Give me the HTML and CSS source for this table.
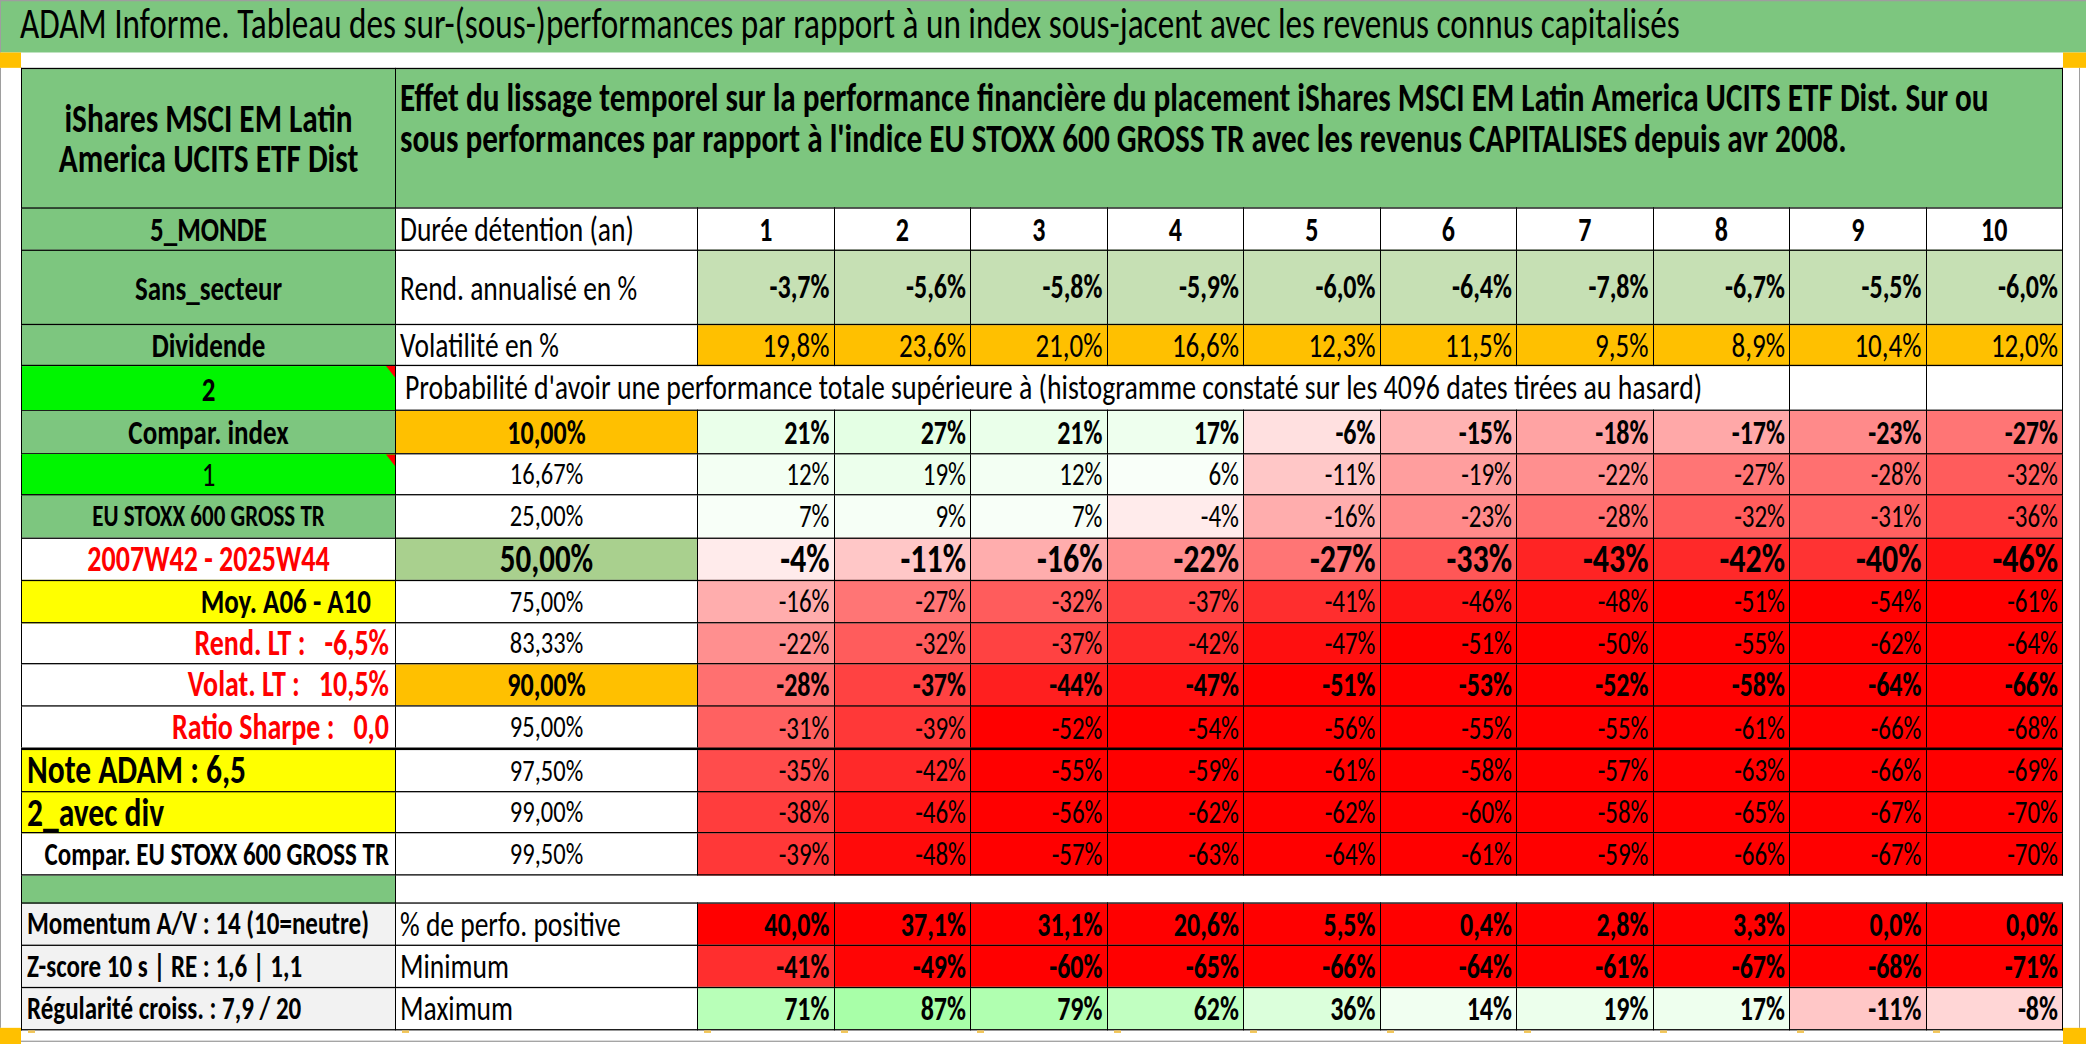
FILE: index.html
```html
<!DOCTYPE html>
<html lang="fr">
<head>
<meta charset="utf-8">
<title>ADAM Informe</title>
<link rel="stylesheet" href="styles.css">
</head>
<body>
<div class="page">
  <header class="title">ADAM Informe. Tableau des sur-(sous-)performances par rapport à un index sous-jacent avec les revenus connus capitalisés</header>
  <div class="strip"><span class="handle"></span><span class="handle hr"></span></div>
  <div class="mid">
    <div class="lg"></div>
    <table class="grid">
      <colgroup>
        <col class="c-lab"><col class="c-lab2">
        <col><col><col><col><col><col><col><col><col><col>
      </colgroup>
      <tr class="h-head">
        <td class="g hd-lab">iShares MSCI EM Latin<br>America UCITS ETF Dist</td>
        <td class="g hd-desc" colspan="11">Effet du lissage temporel sur la performance financière du placement iShares MSCI EM Latin America UCITS ETF Dist. Sur ou<br>sous performances par rapport à l'indice EU STOXX 600 GROSS TR avec les revenus CAPITALISES depuis avr 2008.</td>
      </tr>
      <tr class="h42">
        <td class="g lab c">5_MONDE</td>
        <td class="lab2">Durée détention (an)</td>
        <td class="yr">1</td><td class="yr">2</td><td class="yr">3</td><td class="yr">4</td><td class="yr">5</td><td class="yr">6</td><td class="yr">7</td><td class="yr">8</td><td class="yr">9</td><td class="yr">10</td>
      </tr>
      <tr class="h75">
        <td class="g lab c">Sans_secteur</td>
        <td class="lab2">Rend. annualisé en %</td>
        <td class="vb lg2">-3,7%</td><td class="vb lg2">-5,6%</td><td class="vb lg2">-5,8%</td><td class="vb lg2">-5,9%</td><td class="vb lg2">-6,0%</td><td class="vb lg2">-6,4%</td><td class="vb lg2">-7,8%</td><td class="vb lg2">-6,7%</td><td class="vb lg2">-5,5%</td><td class="vb lg2">-6,0%</td>
      </tr>
      <tr class="h41">
        <td class="g lab c">Dividende</td>
        <td class="lab2">Volatilité en %</td>
        <td class="vol or">19,8%</td><td class="vol or">23,6%</td><td class="vol or">21,0%</td><td class="vol or">16,6%</td><td class="vol or">12,3%</td><td class="vol or">11,5%</td><td class="vol or">9,5%</td><td class="vol or">8,9%</td><td class="vol or">10,4%</td><td class="vol or">12,0%</td>
      </tr>
      <tr class="h45">
        <td class="bg lab c cm">2</td>
        <td class="prob" colspan="9">Probabilité d'avoir une performance totale supérieure à (histogramme constaté sur les 4096 dates tirées au hasard)</td>
        <td></td><td></td>
      </tr>
      <tr class="h43">
        <td class="g lab c">Compar. index</td>
        <td class="p pb or">10,00%</td>
        <td class="vb" style="background:#eaffea">21%</td><td class="vb" style="background:#e4ffe4">27%</td><td class="vb" style="background:#eaffea">21%</td><td class="vb" style="background:#eeffee">17%</td><td class="vb" style="background:#ffe0e0">-6%</td><td class="vb" style="background:#ffb3b3">-15%</td><td class="vb" style="background:#ffa3a3">-18%</td><td class="vb" style="background:#ffa8a8">-17%</td><td class="vb" style="background:#ff8a8a">-23%</td><td class="vb" style="background:#ff7575">-27%</td>
      </tr>
      <tr class="h41">
        <td class="bg lab one c cm">1</td>
        <td class="p">16,67%</td>
        <td class="vr" style="background:#f3fff3">12%</td><td class="vr" style="background:#ecffec">19%</td><td class="vr" style="background:#f3fff3">12%</td><td class="vr" style="background:#f9fff9">6%</td><td class="vr" style="background:#ffc7c7">-11%</td><td class="vr" style="background:#ff9e9e">-19%</td><td class="vr" style="background:#ff8f8f">-22%</td><td class="vr" style="background:#ff7575">-27%</td><td class="vr" style="background:#ff7070">-28%</td><td class="vr" style="background:#ff5c5c">-32%</td>
      </tr>
      <tr class="h43">
        <td class="g lab small c">EU STOXX 600 GROSS TR</td>
        <td class="p">25,00%</td>
        <td class="vr" style="background:#f8fff8">7%</td><td class="vr" style="background:#f6fff6">9%</td><td class="vr" style="background:#f8fff8">7%</td><td class="vr" style="background:#ffebeb">-4%</td><td class="vr" style="background:#ffadad">-16%</td><td class="vr" style="background:#ff8a8a">-23%</td><td class="vr" style="background:#ff7070">-28%</td><td class="vr" style="background:#ff5c5c">-32%</td><td class="vr" style="background:#ff6161">-31%</td><td class="vr" style="background:#ff4747">-36%</td>
      </tr>
      <tr class="h42">
        <td class="lab red big c">2007W42 - 2025W44</td>
        <td class="p pbig lg3">50,00%</td>
        <td class="vbig" style="background:#ffebeb">-4%</td><td class="vbig" style="background:#ffc7c7">-11%</td><td class="vbig" style="background:#ffadad">-16%</td><td class="vbig" style="background:#ff8f8f">-22%</td><td class="vbig" style="background:#ff7575">-27%</td><td class="vbig" style="background:#ff5757">-33%</td><td class="vbig" style="background:#ff2424">-43%</td><td class="vbig" style="background:#ff2929">-42%</td><td class="vbig" style="background:#ff3333">-40%</td><td class="vbig" style="background:#ff1414">-46%</td>
      </tr>
      <tr class="h43">
        <td class="ye lab r moy">Moy. A06 - A10</td>
        <td class="p">75,00%</td>
        <td class="vr" style="background:#ffadad">-16%</td><td class="vr" style="background:#ff7575">-27%</td><td class="vr" style="background:#ff5c5c">-32%</td><td class="vr" style="background:#ff4242">-37%</td><td class="vr" style="background:#ff2e2e">-41%</td><td class="vr" style="background:#ff1414">-46%</td><td class="vr" style="background:#ff0a0a">-48%</td><td class="vr" style="background:#ff0000">-51%</td><td class="vr" style="background:#ff0000">-54%</td><td class="vr" style="background:#ff0000">-61%</td>
      </tr>
      <tr class="h41">
        <td class="lab red big r">Rend. LT :   -6,5%</td>
        <td class="p">83,33%</td>
        <td class="vr" style="background:#ff8f8f">-22%</td><td class="vr" style="background:#ff5c5c">-32%</td><td class="vr" style="background:#ff4242">-37%</td><td class="vr" style="background:#ff2929">-42%</td><td class="vr" style="background:#ff0f0f">-47%</td><td class="vr" style="background:#ff0000">-51%</td><td class="vr" style="background:#ff0000">-50%</td><td class="vr" style="background:#ff0000">-55%</td><td class="vr" style="background:#ff0000">-62%</td><td class="vr" style="background:#ff0000">-64%</td>
      </tr>
      <tr class="h42">
        <td class="lab red big r">Volat. LT :   10,5%</td>
        <td class="p pb or">90,00%</td>
        <td class="vb" style="background:#ff7070">-28%</td><td class="vb" style="background:#ff4242">-37%</td><td class="vb" style="background:#ff1f1f">-44%</td><td class="vb" style="background:#ff0f0f">-47%</td><td class="vb" style="background:#ff0000">-51%</td><td class="vb" style="background:#ff0000">-53%</td><td class="vb" style="background:#ff0000">-52%</td><td class="vb" style="background:#ff0000">-58%</td><td class="vb" style="background:#ff0000">-64%</td><td class="vb" style="background:#ff0000">-66%</td>
      </tr>
      <tr class="h43 thick">
        <td class="lab red big r">Ratio Sharpe :   0,0</td>
        <td class="p">95,00%</td>
        <td class="vr" style="background:#ff6161">-31%</td><td class="vr" style="background:#ff3838">-39%</td><td class="vr" style="background:#ff0000">-52%</td><td class="vr" style="background:#ff0000">-54%</td><td class="vr" style="background:#ff0000">-56%</td><td class="vr" style="background:#ff0000">-55%</td><td class="vr" style="background:#ff0000">-55%</td><td class="vr" style="background:#ff0000">-61%</td><td class="vr" style="background:#ff0000">-66%</td><td class="vr" style="background:#ff0000">-68%</td>
      </tr>
      <tr class="h42">
        <td class="ye lab note l">Note ADAM : 6,5</td>
        <td class="p">97,50%</td>
        <td class="vr" style="background:#ff4c4c">-35%</td><td class="vr" style="background:#ff2929">-42%</td><td class="vr" style="background:#ff0000">-55%</td><td class="vr" style="background:#ff0000">-59%</td><td class="vr" style="background:#ff0000">-61%</td><td class="vr" style="background:#ff0000">-58%</td><td class="vr" style="background:#ff0000">-57%</td><td class="vr" style="background:#ff0000">-63%</td><td class="vr" style="background:#ff0000">-66%</td><td class="vr" style="background:#ff0000">-69%</td>
      </tr>
      <tr class="h42">
        <td class="ye lab note l">2_avec div</td>
        <td class="p">99,00%</td>
        <td class="vr" style="background:#ff3d3d">-38%</td><td class="vr" style="background:#ff1414">-46%</td><td class="vr" style="background:#ff0000">-56%</td><td class="vr" style="background:#ff0000">-62%</td><td class="vr" style="background:#ff0000">-62%</td><td class="vr" style="background:#ff0000">-60%</td><td class="vr" style="background:#ff0000">-58%</td><td class="vr" style="background:#ff0000">-65%</td><td class="vr" style="background:#ff0000">-67%</td><td class="vr" style="background:#ff0000">-70%</td>
      </tr>
      <tr class="h42">
        <td class="lab cmp r">Compar. EU STOXX 600 GROSS TR</td>
        <td class="p">99,50%</td>
        <td class="vr" style="background:#ff3838">-39%</td><td class="vr" style="background:#ff0a0a">-48%</td><td class="vr" style="background:#ff0000">-57%</td><td class="vr" style="background:#ff0000">-63%</td><td class="vr" style="background:#ff0000">-64%</td><td class="vr" style="background:#ff0000">-61%</td><td class="vr" style="background:#ff0000">-59%</td><td class="vr" style="background:#ff0000">-66%</td><td class="vr" style="background:#ff0000">-67%</td><td class="vr" style="background:#ff0000">-70%</td>
      </tr>
      <tr class="h28 blank">
        <td class="g"></td>
        <td class="nb" colspan="11"></td>
      </tr>
      <tr class="h42">
        <td class="gr lab bot l">Momentum A/V : 14 (10=neutre)</td>
        <td class="lab2">% de perfo. positive</td>
        <td class="vb rd">40,0%</td><td class="vb rd">37,1%</td><td class="vb rd">31,1%</td><td class="vb rd">20,6%</td><td class="vb rd">5,5%</td><td class="vb rd">0,4%</td><td class="vb rd">2,8%</td><td class="vb rd">3,3%</td><td class="vb rd">0,0%</td><td class="vb rd">0,0%</td>
      </tr>
      <tr class="h42">
        <td class="gr lab bot l">Z-score 10 s | RE : 1,6 | 1,1</td>
        <td class="lab2">Minimum</td>
        <td class="vb" style="background:#ff2e2e">-41%</td><td class="vb" style="background:#ff0505">-49%</td><td class="vb rd">-60%</td><td class="vb rd">-65%</td><td class="vb rd">-66%</td><td class="vb rd">-64%</td><td class="vb rd">-61%</td><td class="vb rd">-67%</td><td class="vb rd">-68%</td><td class="vb rd">-71%</td>
      </tr>
      <tr class="h42">
        <td class="gr lab bot l">Régularité croiss. : 7,9 / 20</td>
        <td class="lab2">Maximum</td>
        <td class="vb" style="background:#b8ffb8">71%</td><td class="vb" style="background:#a8ffa8">87%</td><td class="vb" style="background:#b0ffb0">79%</td><td class="vb" style="background:#c1ffc1">62%</td><td class="vb" style="background:#dbffdb">36%</td><td class="vb" style="background:#f1fff1">14%</td><td class="vb" style="background:#ecffec">19%</td><td class="vb" style="background:#eeffee">17%</td><td class="vb" style="background:#ffc7c7">-11%</td><td class="vb" style="background:#ffd6d6">-8%</td>
      </tr>
    </table>
    <div class="rg"></div>
  </div>
  <div class="foot">
    <span class="handle"></span>
    <div class="ticks">
      <i></i><i></i><i></i><i></i><i></i><i></i><i></i><i></i><i></i><i></i><i></i><i></i>
    </div>
    <span class="handle hr"></span>
  </div>
</div>
</body>
</html>
```
FILE: styles.css
```css
:root {
  /* the source sheet is displayed with a vertical stretch */
  --s: 1.28;
}
html, body {
  margin: 0;
  padding: 0;
  background: #ffffff;
}
body {
  width: 2086px;
  height: 1044px;
  overflow: hidden;
  font-family: Carlito, "Liberation Sans", sans-serif;
  color: #000;
}
.page {
  width: 2086px;
  height: calc(1044px / var(--s));
  display: flex;
  flex-direction: column;
  transform: scaleY(var(--s));
  transform-origin: 0 0;
}
.title {
  height: calc(52px / var(--s));
  flex: none;
  box-sizing: border-box;
  background: #7dc67f;
  border-top: 1px solid #9e9e9e;
  border-left: 1px solid #9e9e9e;
  font-size: 33.2px;
  line-height: calc(46px / var(--s));
  padding-left: 19px;
  white-space: nowrap;
}
.strip {
  height: calc(16px / var(--s));
  flex: none;
  display: flex;
  justify-content: space-between;
}
.handle {
  display: block;
  width: 21px;
  height: 100%;
  background: #ffc000;
}
.handle.hr {
  width: 23px;
}
.mid {
  display: flex;
  flex: none;
  height: calc(960px / var(--s));
}
.lg {
  width: 20px;
  border-left: 1px solid #9e9e9e;
  flex: none;
}
.rg {
  width: 16px;
  border-right: 1px solid #9e9e9e;
  flex: none;
}
.grid {
  width: 2042px;
  flex: none;
  border-collapse: collapse;
  table-layout: fixed;
  align-self: flex-start;
}
.c-lab { width: 374px; }
.c-lab2 { width: 302px; }
.grid td {
  border: 1px solid #000;
  padding: 0 4px;
  white-space: pre;
  vertical-align: middle;
  line-height: 1;
}
.h-head { height: calc(139px / var(--s)); }
.h42 { height: calc(42px / var(--s)); }
.h75 { height: calc(75px / var(--s)); }
.h41 { height: calc(41px / var(--s)); }
.h45 { height: calc(45px / var(--s)); }
.h43 { height: calc(43px / var(--s)); }
.h28 { height: calc(28px / var(--s)); }
.grid .thick td { border-bottom: 2px solid #000; }

/* fills */
.g { background: #7dc67f; }
.bg { background: #00f500; }
.or { background: #ffc000; }
.ye { background: #ffff00; }
.gr { background: #f2f2f2; }
.lg2 { background: #c6e0b4; }
.lg3 { background: #a9d08e; }
.rd { background: #ff0000; }

/* header */
.grid td.hd-lab {
  font-weight: 700;
  font-size: 31.3px;
  line-height: calc(40px / var(--s));
  text-align: center;
}
.grid td.hd-desc {
  font-weight: 700;
  font-size: 31.2px;
  line-height: calc(41px / var(--s));
  vertical-align: top;
  padding-top: calc(7px / var(--s));
  padding-left: 4px;
}

/* label column */
.lab {
  font-weight: 700;
  font-size: 27px;
}
.lab.c { text-align: center; }
.grid td.lab.r { text-align: right; padding-right: 6px; }
.grid td.lab.l { text-align: left; padding-left: 5px; }
.grid td.lab.moy { padding-right: 24px; }
.lab.one { font-weight: 400; font-size: 27px; }
.lab.small { font-size: 23px; }
.lab.red { color: #ff0000; }
.lab.big { font-size: 28px; }
.lab.note { font-size: 31.5px; }
.lab.cmp { font-size: 25px; }
.lab.bot { font-size: 25px; }

.cm { position: relative; }
.cm::after {
  content: "";
  position: absolute;
  top: 0;
  right: 0;
  width: 0;
  height: 0;
  border-top: 9px solid #ff0000;
  border-left: 9px solid transparent;
}

/* second column */
.lab2 {
  font-size: 27.5px;
  text-align: left;
}
.grid td.prob {
  font-size: 27.8px;
  padding-left: 9px;
}
.p {
  text-align: center;
  font-size: 24.5px;
}
.p.pb { font-weight: 700; font-size: 26px; }
.p.pbig { font-weight: 700; font-size: 31px; }

/* value cells */
.yr {
  text-align: center;
  font-weight: 700;
  font-size: 26px;
}
.vb, .vr, .vbig, .vol {
  text-align: right;
}
.vb { font-weight: 700; font-size: 26px; }
.vr { font-size: 25px; }
.vbig { font-weight: 700; font-size: 32px; }
.vol { font-size: 27px; }

/* blank separator row */
.grid .blank .nb {
  border-left: none;
  border-right: none;
}

/* footer */
.foot {
  display: flex;
  flex: none;
  height: calc(16px / var(--s));
}
.ticks {
  width: 2042px;
  height: calc(13px / var(--s));
  border-bottom: 1px solid #9e9e9e;
  display: grid;
  grid-template-columns: 374px 302px repeat(10, 1fr);
}
.ticks i {
  display: block;
  width: 7px;
  height: 2px;
  margin: 2px 0 0 7px;
  background: #f2c65a;
}
```
